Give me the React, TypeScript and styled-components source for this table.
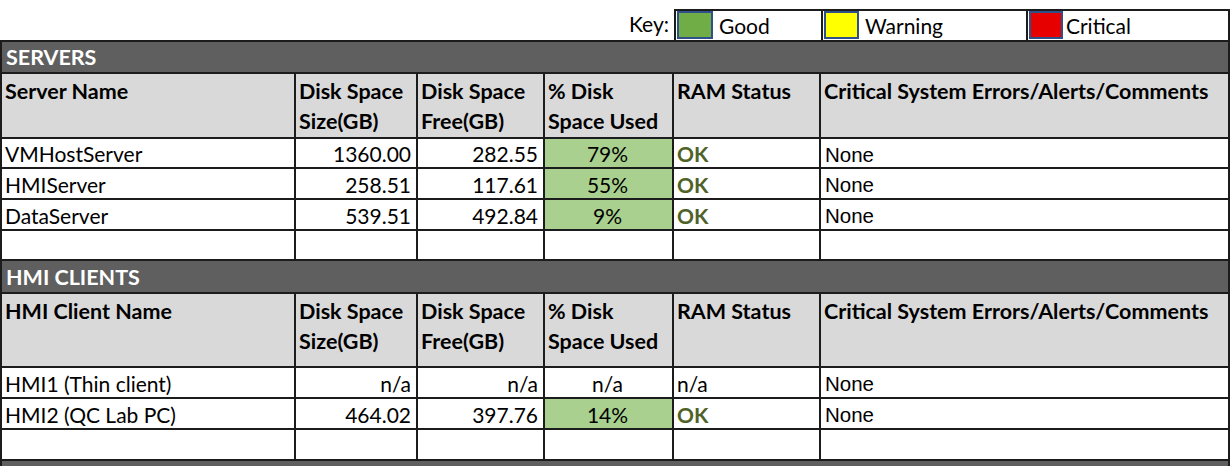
import React from "react";
import styled, { createGlobalStyle } from "styled-components";

const Global = createGlobalStyle`
  html, body { margin: 0; padding: 0; background: #fff; overflow: hidden; }
  body { font-family: Lato, "Open Sans", sans-serif; color: #000; }
`;

const Page = styled.div`
  width: 1230px;
  padding-top: 9px;
`;

const KeyRow = styled.div`
  display: flex;
  height: 31px;
  align-items: stretch;
`;

const KeyLabel = styled.div`
  width: 674px;
  box-sizing: border-box;
  text-align: right;
  padding-right: 5px;
  font-size: 21px;
  line-height: 30px;
`;

const KeyCell = styled.div<{ $w: number; $last?: boolean; $gap: number }>`
  width: ${(p) => p.$w}px;
  box-sizing: border-box;
  border-top: 2px solid #1c1c1c;
  border-left: 2px solid #1c1c1c;
  border-right: ${(p) => (p.$last ? "2px solid #1c1c1c" : "none")};
  display: flex;
  align-items: center;
  gap: ${(p) => p.$gap}px;
  padding: 0 0 0 1px;
  font-size: 21px;
`;

const Swatch = styled.span<{ $color: string; $w: number }>`
  width: ${(p) => p.$w}px;
  height: 28px;
  box-sizing: border-box;
  background: ${(p) => p.$color};
  border: 2px solid #2f4f8a;
  align-self: flex-start;
`;

const Table = styled.table`
  width: 1230px;
  border-collapse: separate;
  border-spacing: 0;
  table-layout: fixed;
  font-size: 21px;
`;

const Row = styled.tr<{ $h: number }>`
  height: ${(p) => p.$h}px;
`;

const BandCell = styled.td<{ $first?: boolean }>`
  background: #5f5f5f;
  color: #fff;
  font-weight: 700;
  font-size: 21.5px;
  padding: 0 0 0 4px;
  border-left: 2px solid #1c1c1c;
  border-right: 2px solid #1c1c1c;
  border-bottom: 2px solid #1c1c1c;
  border-top: ${(p) => (p.$first ? "2px solid #1c1c1c" : "none")};
  vertical-align: middle;
  line-height: 24px;
`;

const HeadCell = styled.td<{ $first?: boolean }>`
  background: #d9d9d9;
  font-weight: 700;
  font-size: 21.5px;
  vertical-align: top;
  padding: 2px 4px 0 3px;
  line-height: 30px;
  border-right: 2px solid #1c1c1c;
  border-bottom: 2px solid #1c1c1c;
  border-left: ${(p) => (p.$first ? "2px solid #1c1c1c" : "none")};
  white-space: nowrap;
  overflow: hidden;
`;

const Cell = styled.td<{
  $first?: boolean;
  $align?: "left" | "right" | "center";
  $fill?: string;
}>`
  background: ${(p) => p.$fill ?? "#fff"};
  text-align: ${(p) => p.$align ?? "left"};
  vertical-align: middle;
  padding: 2px 5px 0 3px;
  line-height: 24px;
  border-right: 2px solid #1c1c1c;
  border-bottom: 2px solid #1c1c1c;
  border-left: ${(p) => (p.$first ? "2px solid #1c1c1c" : "none")};
  white-space: nowrap;
  overflow: hidden;
`;

const Ok = styled.span`
  color: #4f6228;
  font-weight: 700;
`;

const Comment = styled.span`
  font-family: "Liberation Sans", Arial, sans-serif;
  font-size: 20.5px;
  padding-left: 1px;
`;

type DataRow = {
  name: string;
  size: string;
  free: string;
  pct: string;
  good: boolean;
  ram: string;
  comment: string;
  h: number;
};

const servers: DataRow[] = [
  { name: "VMHostServer", size: "1360.00", free: "282.55", pct: "79%", good: true, ram: "OK", comment: "None", h: 30 },
  { name: "HMIServer", size: "258.51", free: "117.61", pct: "55%", good: true, ram: "OK", comment: "None", h: 31 },
  { name: "DataServer", size: "539.51", free: "492.84", pct: "9%", good: true, ram: "OK", comment: "None", h: 31 },
];

const clients: DataRow[] = [
  { name: "HMI1 (Thin client)", size: "n/a", free: "n/a", pct: "n/a", good: false, ram: "n/a", comment: "None", h: 31 },
  { name: "HMI2 (QC Lab PC)", size: "464.02", free: "397.76", pct: "14%", good: true, ram: "OK", comment: "None", h: 31 },
];

const DataRows = ({ rows }: { rows: DataRow[] }) => (
  <>
    {rows.map((r) => (
      <Row $h={r.h} key={r.name}>
        <Cell $first>{r.name}</Cell>
        <Cell $align="right">{r.size}</Cell>
        <Cell $align="right">{r.free}</Cell>
        <Cell $align="center" $fill={r.good ? "#a9d08e" : "#fff"}>
          {r.pct}
        </Cell>
        <Cell>{r.ram === "OK" ? <Ok>OK</Ok> : r.ram}</Cell>
        <Cell>
          <Comment>{r.comment}</Comment>
        </Cell>
      </Row>
    ))}
  </>
);

const EmptyRow = ({ h }: { h: number }) => (
  <Row $h={h}>
    <Cell $first />
    <Cell />
    <Cell />
    <Cell />
    <Cell />
    <Cell />
  </Row>
);

const Header = ({ first, h }: { first: string; h: number }) => (
  <Row $h={h}>
    <HeadCell $first>{first}</HeadCell>
    <HeadCell>
      Disk Space
      <br />
      Size(GB)
    </HeadCell>
    <HeadCell>
      Disk Space
      <br />
      Free(GB)
    </HeadCell>
    <HeadCell>
      % Disk
      <br />
      Space Used
    </HeadCell>
    <HeadCell>RAM Status</HeadCell>
    <HeadCell>Critical System Errors/Alerts/Comments</HeadCell>
  </Row>
);

export default function App() {
  return (
    <Page>
      <Global />
      <KeyRow>
        <KeyLabel>Key:</KeyLabel>
        <KeyCell $w={147} $gap={6}>
          <Swatch $color="#70ad47" $w={36} />
          Good
        </KeyCell>
        <KeyCell $w={205} $gap={6}>
          <Swatch $color="#ffff00" $w={35} />
          Warning
        </KeyCell>
        <KeyCell $w={204} $last $gap={3}>
          <Swatch $color="#e60000" $w={34} />
          Critical
        </KeyCell>
      </KeyRow>
      <Table>
        <colgroup>
          <col style={{ width: 296 }} />
          <col style={{ width: 122 }} />
          <col style={{ width: 127 }} />
          <col style={{ width: 129 }} />
          <col style={{ width: 147 }} />
          <col />
        </colgroup>
        <tbody>
          <Row $h={34}>
            <BandCell colSpan={6} $first>
              SERVERS
            </BandCell>
          </Row>
          <Header first="Server Name" h={65} />
          <DataRows rows={servers} />
          <EmptyRow h={30} />
          <Row $h={33}>
            <BandCell colSpan={6}>HMI CLIENTS</BandCell>
          </Row>
          <Header first="HMI Client Name" h={74} />
          <DataRows rows={clients} />
          <EmptyRow h={31} />
          <Row $h={33}>
            <BandCell colSpan={6}>&nbsp;</BandCell>
          </Row>
        </tbody>
      </Table>
    </Page>
  );
}
